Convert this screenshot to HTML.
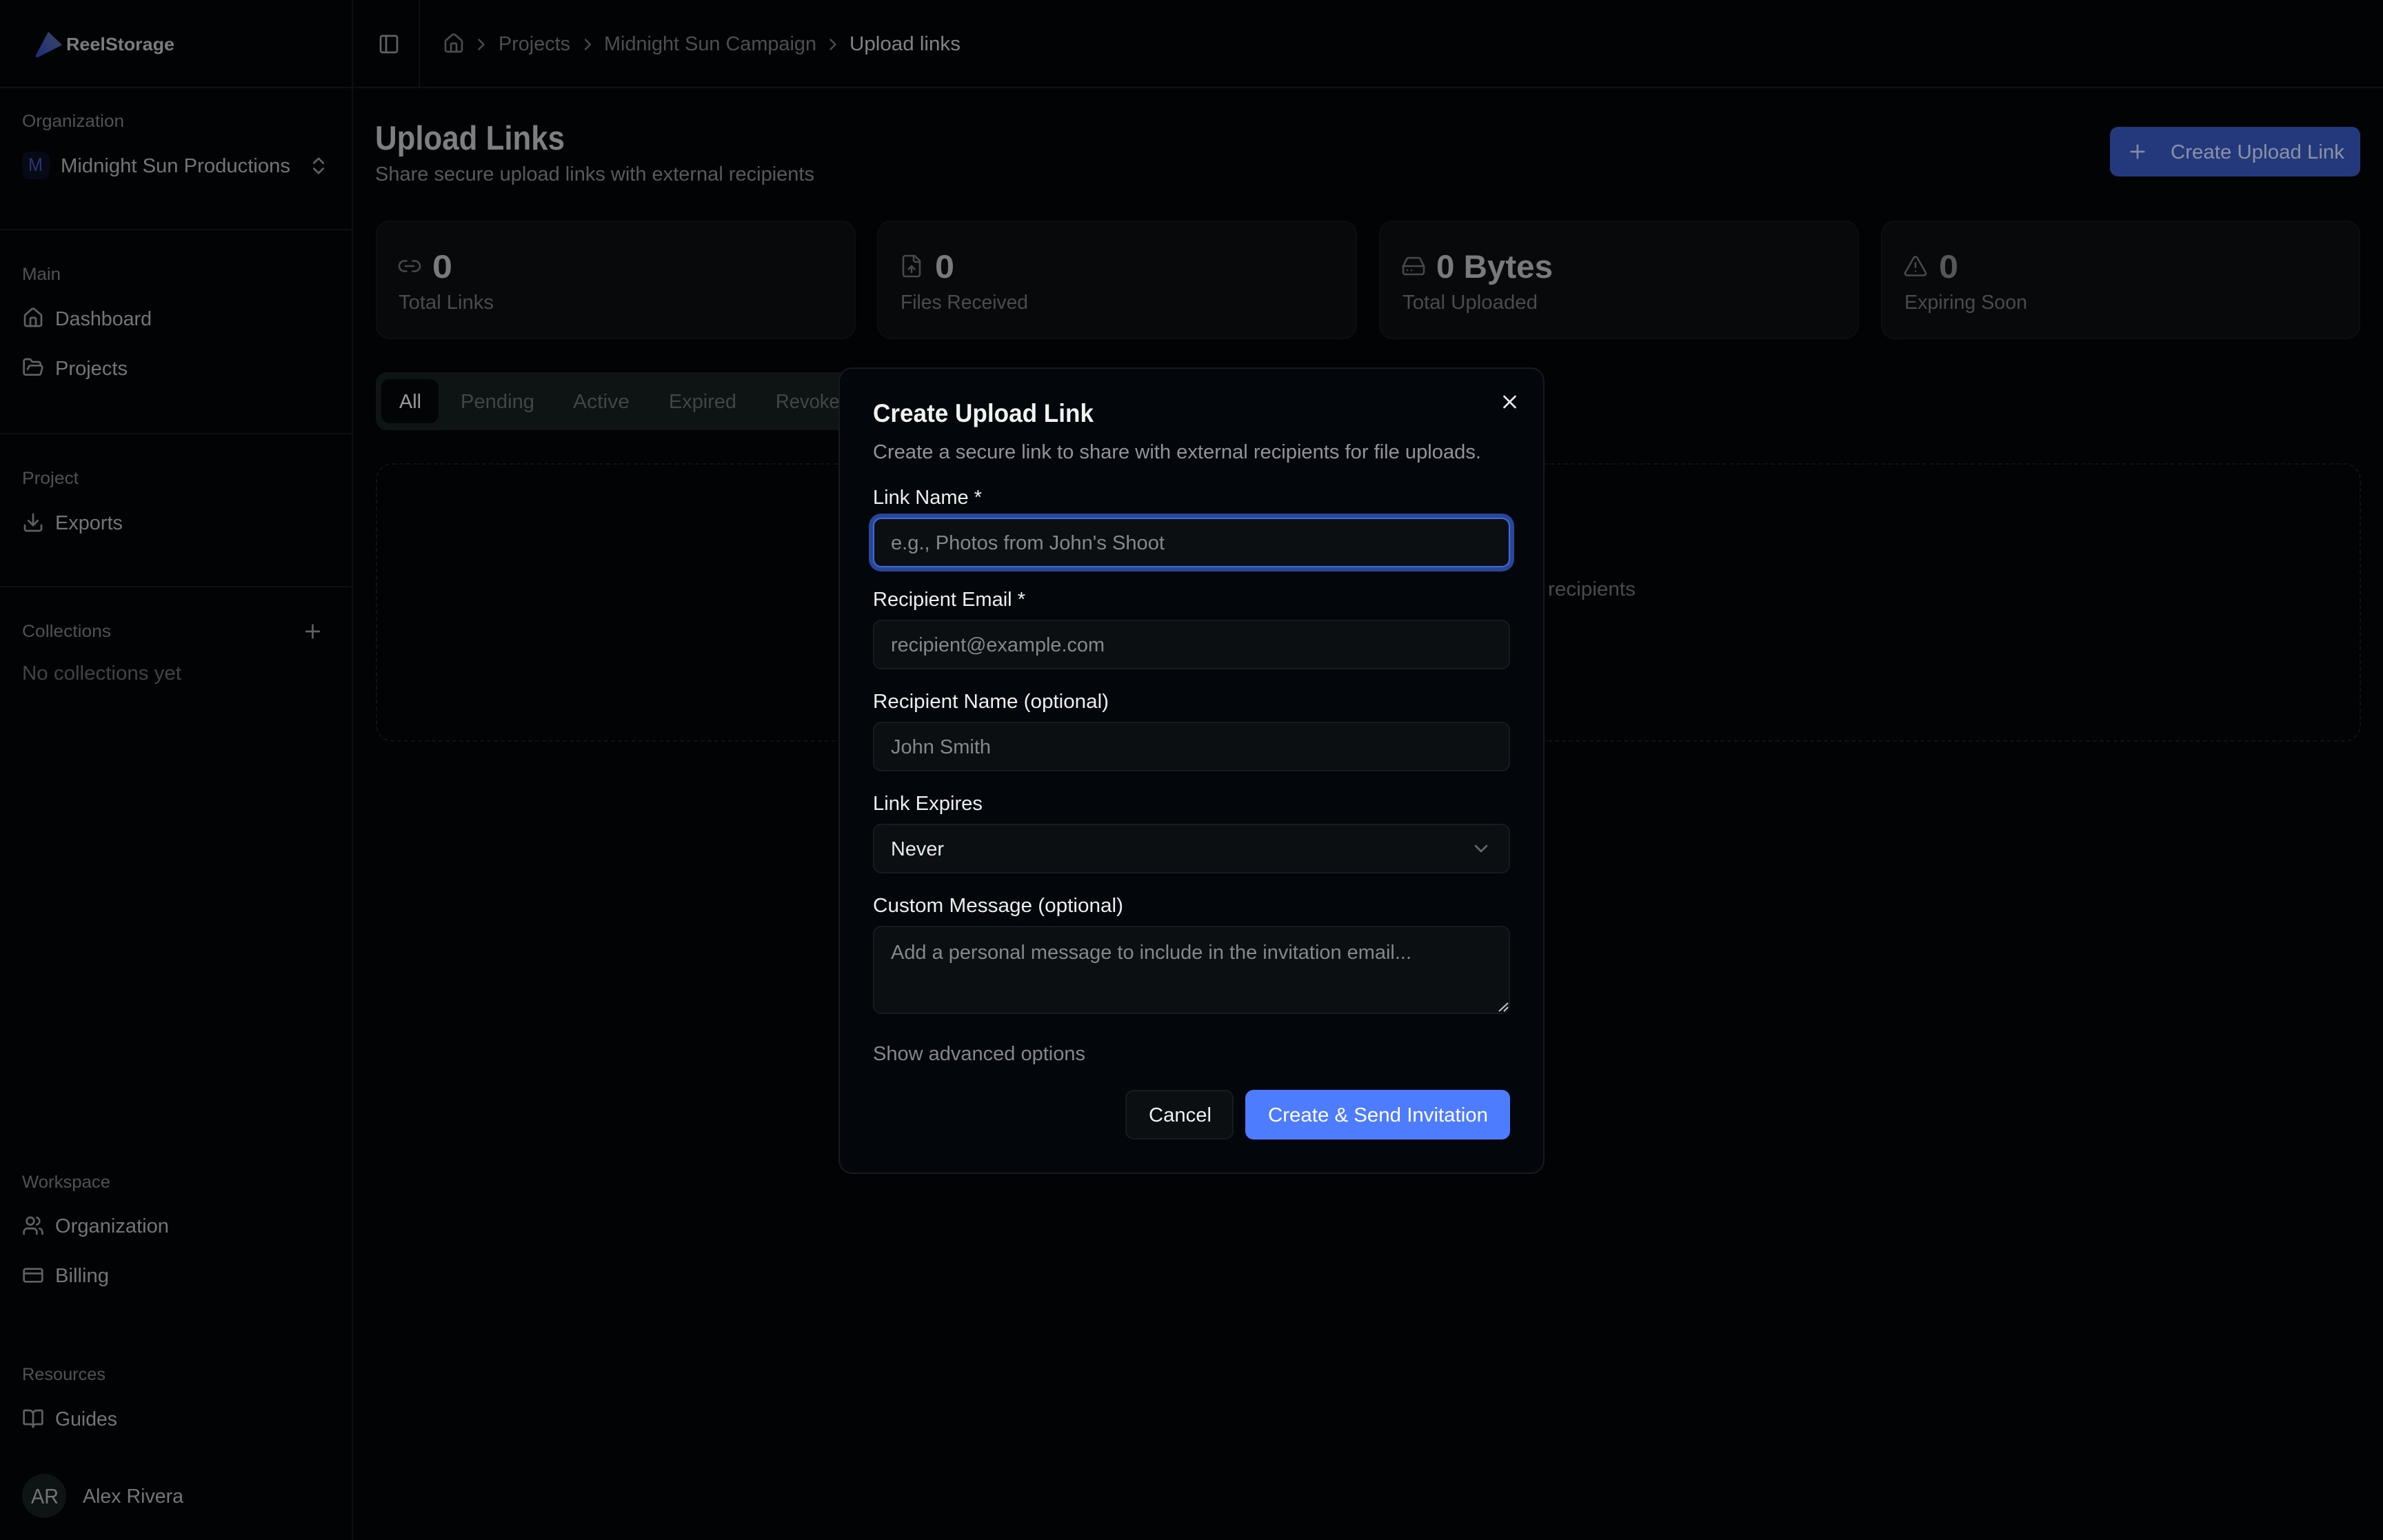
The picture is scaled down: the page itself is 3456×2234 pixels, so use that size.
<!DOCTYPE html>
<html lang="en">
<head>
<meta charset="utf-8">
<title>ReelStorage – Upload Links</title>
<style>
html,body{margin:0;padding:0;background:#020304;width:3456px;height:2234px;overflow:hidden}
body{position:relative;font-family:"Liberation Sans",sans-serif}
.b{position:absolute;box-sizing:border-box}
svg{position:absolute;left:0;top:0;font-family:"Liberation Sans",sans-serif}
svg text{white-space:pre}
.ic{fill:none;stroke-width:2;stroke-linecap:round;stroke-linejoin:round}
.line{background:#0c1012}
.card{background:#07090b;border:2px solid #0b0f11;border-radius:20px;top:320px;height:172px}
.inp{left:1266px;width:924px;height:72px;background:#0b0f12;border:2px solid #171b1e;border-radius:12px}
</style>
</head>
<body>
<!-- structural lines -->
<div class="b line" style="left:510px;top:0;width:2px;height:2234px"></div>
<div class="b line" style="left:0;top:126px;width:3456px;height:2px"></div>
<div class="b line" style="left:607px;top:0;width:2px;height:126px"></div>
<div class="b line" style="left:0;top:332px;width:510px;height:2px"></div>
<div class="b line" style="left:0;top:628px;width:510px;height:2px"></div>
<div class="b line" style="left:0;top:850px;width:510px;height:2px"></div>

<!-- org avatar + user avatar -->
<div class="b" style="left:32px;top:220px;width:40px;height:40px;border-radius:10px;background:#070a14"></div>
<div class="b" style="left:32px;top:2138px;width:64px;height:64px;border-radius:50%;background:#0e1314"></div>

<!-- header button -->
<div class="b" style="left:3060px;top:184px;width:363px;height:72px;border-radius:12px;background:#24397c"></div>

<!-- stats -->
<div class="b card" style="left:545px;width:696px"></div>
<div class="b card" style="left:1272px;width:696px"></div>
<div class="b card" style="left:2000px;width:696px"></div>
<div class="b card" style="left:2728px;width:695px"></div>

<!-- tabs -->
<div class="b" style="left:545px;top:540px;width:1000px;height:84px;border-radius:16px;background:#0e1314"></div>
<div class="b" style="left:553px;top:550px;width:83px;height:64px;border-radius:12px;background:#030405"></div>

<!-- empty state -->
<div class="b" style="left:545px;top:672px;width:2879px;height:404px;border:2px dashed #101315;border-radius:24px"></div>

<!-- background text + icons -->
<svg width="3456" height="2234" viewBox="0 0 3456 2234">
<defs>
<linearGradient id="lg" x1="1" y1="0" x2="0" y2="1"><stop offset="0" stop-color="#3c4663"/><stop offset="1" stop-color="#1b2e7c"/></linearGradient>
</defs>
<path d="M71 47 L89 64 Q90 65.500 88 66.500 L55 83 Q51 84 52 80 L69 48 Q70 46 71 47Z" fill="url(#lg)"/>
<text x="96" y="73" font-size="26" font-weight="700" fill="#7c7c7c" textLength="157" lengthAdjust="spacingAndGlyphs">ReelStorage</text>

<g font-size="25" fill="#505253">
<text x="32" y="184" textLength="148" lengthAdjust="spacingAndGlyphs">Organization</text>
<text x="32" y="406" textLength="56" lengthAdjust="spacingAndGlyphs">Main</text>
<text x="32" y="702" textLength="82" lengthAdjust="spacingAndGlyphs">Project</text>
<text x="32" y="924" textLength="129" lengthAdjust="spacingAndGlyphs">Collections</text>
<text x="32" y="1723" textLength="128" lengthAdjust="spacingAndGlyphs">Workspace</text>
<text x="32" y="2002" textLength="121" lengthAdjust="spacingAndGlyphs">Resources</text>
</g>
<text x="41" y="248" font-size="27" fill="#263874" textLength="21" lengthAdjust="spacingAndGlyphs">M</text>
<g font-size="29" fill="#737576">
<text x="88" y="250" textLength="333" lengthAdjust="spacingAndGlyphs">Midnight Sun Productions</text>
<text x="80" y="472" textLength="140" lengthAdjust="spacingAndGlyphs">Dashboard</text>
<text x="80" y="544" textLength="105" lengthAdjust="spacingAndGlyphs">Projects</text>
<text x="80" y="768" textLength="98" lengthAdjust="spacingAndGlyphs">Exports</text>
<text x="80" y="1788" textLength="165" lengthAdjust="spacingAndGlyphs">Organization</text>
<text x="80" y="1860" textLength="78" lengthAdjust="spacingAndGlyphs">Billing</text>
<text x="80" y="2068" textLength="90" lengthAdjust="spacingAndGlyphs">Guides</text>
<text x="45" y="2181" font-size="31" textLength="40" lengthAdjust="spacingAndGlyphs">AR</text>
<text x="120" y="2180" textLength="146" lengthAdjust="spacingAndGlyphs">Alex Rivera</text>
</g>
<text x="32" y="986" font-size="29" fill="#414344" textLength="231" lengthAdjust="spacingAndGlyphs">No collections yet</text>

<!-- sidebar icons -->
<g class="ic" stroke="#5f6163">
<g transform="translate(446 224.500) scale(1.3333)"><path d="m7 15 5 5 5-5"/><path d="m7 9 5-5 5 5"/></g>
<g transform="translate(32 445) scale(1.3333)"><path d="M15 21v-8a1 1 0 0 0-1-1h-4a1 1 0 0 0-1 1v8"/><path d="M3 10a2 2 0 0 1 .709-1.528l7-5.999a2 2 0 0 1 2.582 0l7 5.999A2 2 0 0 1 21 10v9a2 2 0 0 1-2 2H5a2 2 0 0 1-2-2z"/></g>
<g transform="translate(32 517) scale(1.3333)"><path d="m6 14 1.500-2.900A2 2 0 0 1 9.240 10H20a2 2 0 0 1 1.940 2.500l-1.540 6a2 2 0 0 1-1.950 1.500H4a2 2 0 0 1-2-2V5a2 2 0 0 1 2-2h3.900a2 2 0 0 1 1.690.900l.810 1.200a2 2 0 0 0 1.690.900H18a2 2 0 0 1 2 2v2"/></g>
<g transform="translate(32 742) scale(1.3333)"><path d="M12 15V3"/><path d="M21 15v4a2 2 0 0 1-2 2H5a2 2 0 0 1-2-2v-4"/><path d="m7 10 5 5 5-5"/></g>
<g transform="translate(437.500 900) scale(1.3333)"><path d="M5 12h14"/><path d="M12 5v14"/></g>
<g transform="translate(32 1762) scale(1.3333)"><path d="M16 21v-2a4 4 0 0 0-4-4H6a4 4 0 0 0-4 4v2"/><circle cx="9" cy="7" r="4"/><path d="M22 21v-2a4 4 0 0 0-3-3.870"/><path d="M16 3.130a4 4 0 0 1 0 7.750"/></g>
<g transform="translate(32 1834) scale(1.3333)"><rect width="20" height="14" x="2" y="5" rx="2"/><path d="M2 10h20"/></g>
<g transform="translate(32 2042) scale(1.3333)"><path d="M12 7v14"/><path d="M3 18a1 1 0 0 1-1-1V4a1 1 0 0 1 1-1h5a4 4 0 0 1 4 4 4 4 0 0 1 4-4h5a1 1 0 0 1 1 1v13a1 1 0 0 1-1 1h-6a3 3 0 0 0-3 3 3 3 0 0 0-3-3z"/></g>
<g transform="translate(548 48) scale(1.3333)"><rect width="18" height="18" x="3" y="3" rx="2"/><path d="M9 3v18"/></g>
</g>

<!-- breadcrumb -->
<g class="ic" stroke="#4a4c4d">
<g transform="translate(642 47) scale(1.3333)"><path d="M15 21v-8a1 1 0 0 0-1-1h-4a1 1 0 0 0-1 1v8"/><path d="M3 10a2 2 0 0 1 .709-1.528l7-5.999a2 2 0 0 1 2.582 0l7 5.999A2 2 0 0 1 21 10v9a2 2 0 0 1-2 2H5a2 2 0 0 1-2-2z"/></g>
<g transform="translate(684 50.500) scale(1.1667)"><path d="m9 18 6-6-6-6"/></g>
<g transform="translate(838.500 50.500) scale(1.1667)"><path d="m9 18 6-6-6-6"/></g>
<g transform="translate(1194 50.500) scale(1.1667)"><path d="m9 18 6-6-6-6"/></g>
</g>
<g font-size="29" fill="#4c4e4f">
<text x="723" y="73" textLength="104" lengthAdjust="spacingAndGlyphs">Projects</text>
<text x="876" y="73" textLength="308" lengthAdjust="spacingAndGlyphs">Midnight Sun Campaign</text>
</g>
<text x="1232" y="73" font-size="29" fill="#828384" textLength="161" lengthAdjust="spacingAndGlyphs">Upload links</text>

<!-- page header -->
<text x="544" y="217" font-size="49" font-weight="700" fill="#7f7f7f" textLength="275" lengthAdjust="spacingAndGlyphs">Upload Links</text>
<text x="544" y="262" font-size="29" fill="#58595a" textLength="637" lengthAdjust="spacingAndGlyphs">Share secure upload links with external recipients</text>
<g class="ic" stroke="#7f89a8"><g transform="translate(3084 204) scale(1.3333)"><path d="M5 12h14"/><path d="M12 5v14"/></g></g>
<text x="3148" y="230" font-size="29" fill="#8b91a6" textLength="252" lengthAdjust="spacingAndGlyphs">Create Upload Link</text>

<!-- stat cards -->
<g class="ic" stroke="#47494b">
<g transform="translate(576 368) scale(1.5)" stroke-width="1.700"><path d="M9 17H7A5 5 0 0 1 7 7h2"/><path d="M15 7h2a5 5 0 1 1 0 10h-2"/><path d="M8 12h8"/></g>
<g transform="translate(1304 368) scale(1.5)" stroke-width="1.700"><path d="M15 2H6a2 2 0 0 0-2 2v16a2 2 0 0 0 2 2h12a2 2 0 0 0 2-2V7Z"/><path d="M14 2v4a2 2 0 0 0 2 2h4"/><path d="M12 12v6"/><path d="m15 15-3-3-3 3"/></g>
<g transform="translate(2032 368) scale(1.5)" stroke-width="1.700"><path d="M22 12H2"/><path d="M5.450 5.110 2 12v6a2 2 0 0 0 2 2h16a2 2 0 0 0 2-2v-6l-3.450-6.890A2 2 0 0 0 16.760 4H7.240a2 2 0 0 0-1.790 1.110z"/><path d="M6 16h.01"/><path d="M10 16h.01"/></g>
<g transform="translate(2760 368) scale(1.5)" stroke-width="1.700"><path d="m21.730 18-8-14a2 2 0 0 0-3.480 0l-8 14A2 2 0 0 0 4 21h16a2 2 0 0 0 1.730-3"/><path d="M12 9v4"/><path d="M12 17h.01"/></g>
</g>
<g font-size="47" font-weight="700" fill="#797a7b">
<text x="627" y="403" textLength="29" lengthAdjust="spacingAndGlyphs">0</text>
<text x="1356" y="403" textLength="28" lengthAdjust="spacingAndGlyphs">0</text>
<text x="2083" y="403" textLength="169" lengthAdjust="spacingAndGlyphs">0 Bytes</text>
<text x="2812" y="403" textLength="28" lengthAdjust="spacingAndGlyphs" fill="#555758">0</text>
</g>
<g font-size="29" fill="#494b4c">
<text x="578" y="448" textLength="138" lengthAdjust="spacingAndGlyphs">Total Links</text>
<text x="1306" y="448" textLength="185" lengthAdjust="spacingAndGlyphs">Files Received</text>
<text x="2034" y="448" textLength="196" lengthAdjust="spacingAndGlyphs">Total Uploaded</text>
<text x="2762" y="448" textLength="178" lengthAdjust="spacingAndGlyphs">Expiring Soon</text>
</g>

<!-- tabs -->
<text x="579" y="592" font-size="29" fill="#9a9a9a" textLength="32" lengthAdjust="spacingAndGlyphs">All</text>
<g font-size="29" fill="#424546">
<text x="668" y="592" textLength="107" lengthAdjust="spacingAndGlyphs">Pending</text>
<text x="831" y="592" textLength="82" lengthAdjust="spacingAndGlyphs">Active</text>
<text x="970" y="592" textLength="98" lengthAdjust="spacingAndGlyphs">Expired</text>
<text x="1125" y="592" textLength="108" lengthAdjust="spacingAndGlyphs">Revoked</text>
</g>
<text x="2245" y="864" font-size="29" fill="#4a4a4a" textLength="127" lengthAdjust="spacingAndGlyphs">recipients</text>
</svg>

<!-- dialog -->
<div class="b" style="left:1216px;top:533px;width:1024px;height:1170px;background:#03060a;border:2px solid #171b1e;border-radius:20px"></div>
<div class="b inp" style="top:751px;border-color:#3d6ae0;box-shadow:0 0 0 6px #2a4796"></div>
<div class="b inp" style="top:899px"></div>
<div class="b inp" style="top:1047px"></div>
<div class="b inp" style="top:1195px"></div>
<div class="b inp" style="top:1343px;height:128px"></div>
<div class="b" style="left:1632px;top:1581px;width:157px;height:72px;background:#0b0f12;border:2px solid #171b1e;border-radius:12px"></div>
<div class="b" style="left:1806px;top:1581px;width:384px;height:72px;background:#4d7cfe;border-radius:12px"></div>

<svg width="3456" height="2234" viewBox="0 0 3456 2234">
<g class="ic" stroke="#e8e8e8"><g transform="translate(2173.500 567) scale(1.3333)"><path d="M18 6 6 18"/><path d="m6 6 12 12"/></g></g>
<text x="1266" y="612" font-size="37" font-weight="700" fill="#f2f2f2" textLength="320" lengthAdjust="spacingAndGlyphs">Create Upload Link</text>
<text x="1266" y="665" font-size="29" fill="#909498" textLength="882" lengthAdjust="spacingAndGlyphs">Create a secure link to share with external recipients for file uploads.</text>
<g font-size="29" fill="#eeeeee">
<text x="1266" y="731" textLength="158" lengthAdjust="spacingAndGlyphs">Link Name *</text>
<text x="1266" y="879" textLength="221" lengthAdjust="spacingAndGlyphs">Recipient Email *</text>
<text x="1266" y="1027" textLength="342" lengthAdjust="spacingAndGlyphs">Recipient Name (optional)</text>
<text x="1266" y="1175" textLength="159" lengthAdjust="spacingAndGlyphs">Link Expires</text>
<text x="1266" y="1323" textLength="363" lengthAdjust="spacingAndGlyphs">Custom Message (optional)</text>
</g>
<g font-size="29" fill="#85888a">
<text x="1292" y="797" textLength="397" lengthAdjust="spacingAndGlyphs">e.g., Photos from John's Shoot</text>
<text x="1292" y="945" textLength="310" lengthAdjust="spacingAndGlyphs">recipient@example.com</text>
<text x="1292" y="1093" textLength="145" lengthAdjust="spacingAndGlyphs">John Smith</text>
<text x="1292" y="1391" textLength="755" lengthAdjust="spacingAndGlyphs">Add a personal message to include in the invitation email...</text>
<text x="1266" y="1538" textLength="308" lengthAdjust="spacingAndGlyphs">Show advanced options</text>
</g>
<text x="1292" y="1241" font-size="29" fill="#e8e8e8" textLength="77" lengthAdjust="spacingAndGlyphs">Never</text>
<g class="ic" stroke="#66696b"><g transform="translate(2132 1215) scale(1.3333)"><path d="m6 9 6 6 6-6"/></g></g>
<path d="M2174 1467 L2187 1455 M2181 1467 L2187 1461" stroke="#c8c8c8" stroke-width="2" fill="none"/>
<text x="1666" y="1627" font-size="29" fill="#f0f0f0" textLength="91" lengthAdjust="spacingAndGlyphs">Cancel</text>
<text x="1839" y="1627" font-size="29" fill="#ffffff" textLength="319" lengthAdjust="spacingAndGlyphs">Create &amp; Send Invitation</text>
</svg>
</body>
</html>
